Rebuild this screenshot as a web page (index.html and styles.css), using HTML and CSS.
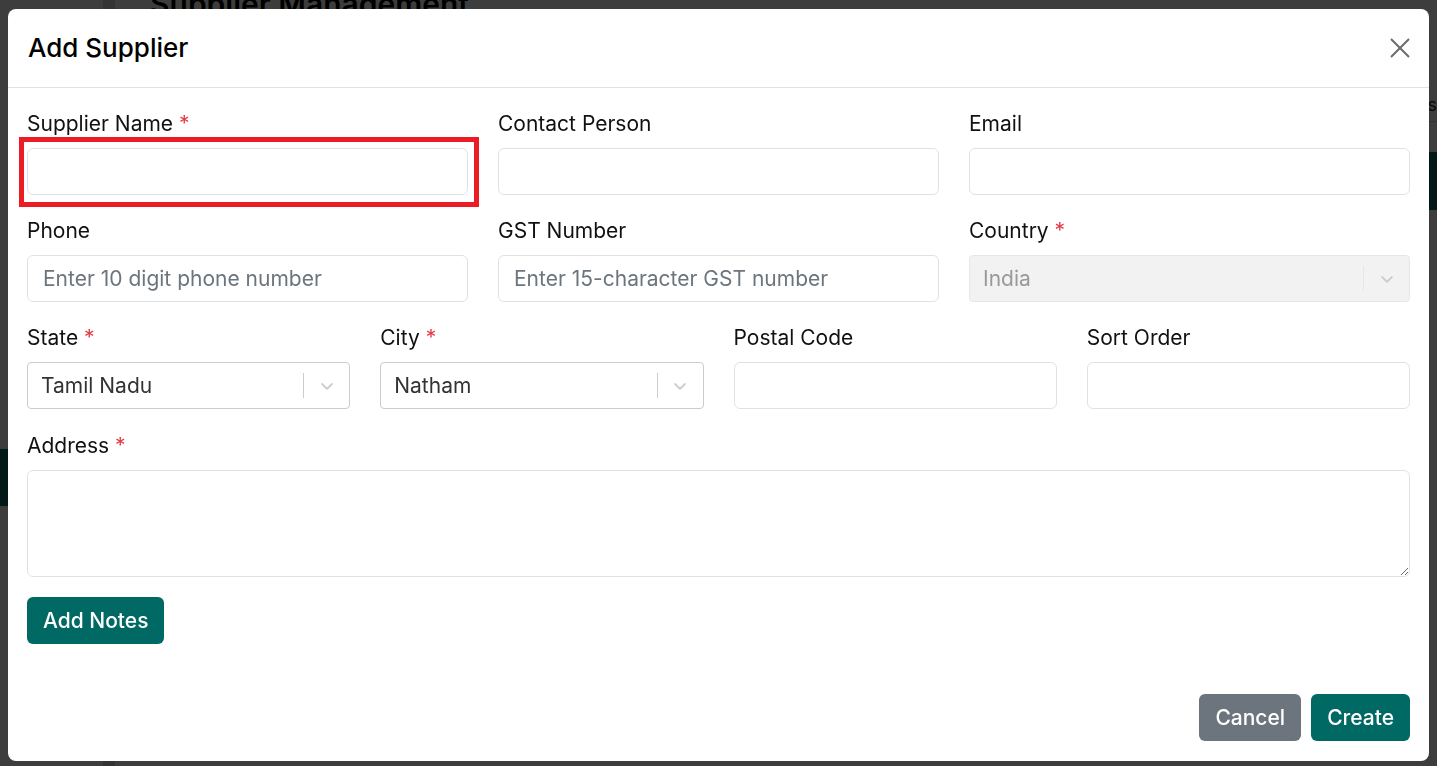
FILE: index.html
```html
<!DOCTYPE html>
<html lang="en">

<head>
    <meta charset="UTF-8">
    <title>Supplier Management</title>
    <meta name="viewport" content="width=device-width, initial-scale=1.0">
    <link rel="stylesheet" href="styles.css">
</head>

<body>
    <div class="page">
        <aside class="sidebar">
            <div class="sidebar-top"></div>
            <nav class="side-nav">
                <a class="side-link active">Suppliers</a>
                <a class="side-link">Purchaser</a>
                <a class="side-link">Reporter</a>
            </nav>
        </aside>
        <main class="main">
            <h1 class="page-title">Supplier Management</h1>
            <div class="toolbar"><span>Status</span></div>
            <div class="table-head"></div>
        </main>
    </div>

    <div class="backdrop">
        <div class="modal" role="dialog" aria-labelledby="modalTitle">
            <div class="modal-header">
                <h2 id="modalTitle">Add Supplier</h2>
                <button class="close-btn" type="button" aria-label="Close">
                    <svg width="20" height="20" viewBox="0 0 20 20" fill="none" stroke="currentColor" stroke-width="2">
                        <path d="M1 1L19 19M19 1L1 19" />
                    </svg>
                </button>
            </div>

            <form class="modal-body">
                <div class="row cols-3">
                    <div class="field">
                        <label>Supplier Name <span class="req">*</span></label>
                        <div class="flagged">
                            <input class="input" type="text">
                        </div>
                    </div>
                    <div class="field">
                        <label>Contact Person</label>
                        <input class="input" type="text">
                    </div>
                    <div class="field">
                        <label>Email</label>
                        <input class="input" type="email">
                    </div>
                </div>

                <div class="row cols-3">
                    <div class="field">
                        <label>Phone</label>
                        <input class="input" type="text" placeholder="Enter 10 digit phone number">
                    </div>
                    <div class="field">
                        <label>GST Number</label>
                        <input class="input" type="text" placeholder="Enter 15-character GST number">
                    </div>
                    <div class="field">
                        <label>Country <span class="req">*</span></label>
                        <div class="select disabled">
                            <span class="select-value">India</span>
                            <span class="select-sep"></span>
                            <span class="select-arrow">
                                <svg width="20" height="20" viewBox="0 0 20 20"><path fill="currentColor" d="M4.5 7.4c.4-.4 1-.4 1.4 0L10 11.4l4.1-4c.4-.4 1-.4 1.4 0 .4.4.4 1 0 1.4l-4.8 4.6c-.4.4-1 .4-1.4 0L4.5 8.8c-.4-.4-.4-1 0-1.4z"/></svg>
                            </span>
                        </div>
                    </div>
                </div>

                <div class="row cols-4">
                    <div class="field">
                        <label>State <span class="req">*</span></label>
                        <div class="select">
                            <span class="select-value">Tamil Nadu</span>
                            <span class="select-sep"></span>
                            <span class="select-arrow">
                                <svg width="20" height="20" viewBox="0 0 20 20"><path fill="currentColor" d="M4.5 7.4c.4-.4 1-.4 1.4 0L10 11.4l4.1-4c.4-.4 1-.4 1.4 0 .4.4.4 1 0 1.4l-4.8 4.6c-.4.4-1 .4-1.4 0L4.5 8.8c-.4-.4-.4-1 0-1.4z"/></svg>
                            </span>
                        </div>
                    </div>
                    <div class="field">
                        <label>City <span class="req">*</span></label>
                        <div class="select">
                            <span class="select-value">Natham</span>
                            <span class="select-sep"></span>
                            <span class="select-arrow">
                                <svg width="20" height="20" viewBox="0 0 20 20"><path fill="currentColor" d="M4.5 7.4c.4-.4 1-.4 1.4 0L10 11.4l4.1-4c.4-.4 1-.4 1.4 0 .4.4.4 1 0 1.4l-4.8 4.6c-.4.4-1 .4-1.4 0L4.5 8.8c-.4-.4-.4-1 0-1.4z"/></svg>
                            </span>
                        </div>
                    </div>
                    <div class="field">
                        <label>Postal Code</label>
                        <input class="input" type="text">
                    </div>
                    <div class="field">
                        <label>Sort Order</label>
                        <input class="input" type="text">
                    </div>
                </div>

                <div class="field address">
                    <label>Address <span class="req">*</span></label>
                    <textarea class="input textarea"></textarea>
                </div>

                <div class="notes-row">
                    <button class="btn btn-teal" type="button">Add Notes</button>
                </div>
            </form>

            <div class="modal-footer">
                <button class="btn btn-gray" type="button">Cancel</button>
                <button class="btn btn-teal" type="button">Create</button>
            </div>
        </div>
    </div>
</body>

</html>
```

FILE: styles.css
```css
* {
    margin: 0;
    padding: 0;
    box-sizing: border-box;
}

body {
    font-family: Inter, 'Noto Sans', sans-serif;
    color: #212529;
    background: white;
    height: 100vh;
    overflow: hidden;
}

/* page behind the dialog */
.page {
    display: flex;
    height: 100vh;
}

.sidebar {
    width: 115px;
    background: white;
    border-right: 12px solid #d9d9d9;
    display: flex;
    flex-direction: column;
}

.sidebar-top {
    height: 458px;
}

.side-nav {
    display: flex;
    flex-direction: column;
}

.side-link {
    height: 57px;
    padding: 0 12px;
    display: flex;
    align-items: center;
    font-size: 20px;
    color: #111;
}

.side-link.active {
    background: #0a6b66;
    color: white;
}

.side-link + .side-link {
    margin-top: 140px;
}

.side-link.active + .side-link {
    margin-top: 6px;
}

.main {
    flex: 1;
    padding: 0 0 0 35px;
}

.page-title {
    font-size: 30px;
    font-weight: 600;
    margin-top: -14px;
    color: #000;
}

.toolbar {
    height: 100px;
    border-bottom: 1px solid #ccc;
    display: flex;
    justify-content: flex-end;
    align-items: flex-end;
    padding-bottom: 6px;
    font-size: 18px;
}

.table-head {
    height: 58px;
    margin-top: 30px;
    background: #0a6b66;
}

/* dialog */
.backdrop {
    position: fixed;
    inset: 0;
    background: rgba(0, 0, 0, 0.76);
    padding: 9px 8px 5px;
    display: flex;
}

.modal {
    flex: 1;
    background: white;
    border-radius: 8px;
    display: flex;
    flex-direction: column;
}

.modal-header {
    height: 79px;
    border-bottom: 1px solid #dee2e6;
    display: flex;
    align-items: center;
    justify-content: space-between;
    padding: 0 19px 0 20px;
}

.modal-header h2 {
    font-size: 26px;
    font-weight: 500;
    color: #000;
    margin-top: -1px;
}

.close-btn {
    background: none;
    border: none;
    color: #6b6b6b;
    width: 20px;
    height: 20px;
    display: flex;
    cursor: pointer;
}

.modal-body {
    padding: 22px 19px 0;
    display: flex;
    flex-direction: column;
    gap: 22px;
}

.row {
    display: grid;
    column-gap: 30px;
}

.cols-3 {
    grid-template-columns: repeat(3, 1fr);
}

.cols-4 {
    grid-template-columns: repeat(4, 1fr);
}

.field label {
    display: block;
    font-size: 21px;
    line-height: 27px;
    margin-bottom: 11px;
    color: #111;
}

.field.address {
    margin-top: 1px;
}

.req {
    color: #e53946;
}

.input {
    display: block;
    width: 100%;
    height: 47px;
    border: 1px solid #dee2e6;
    border-radius: 6px;
    padding: 9px 15px;
    font-family: inherit;
    font-size: 21px;
    line-height: 27px;
    color: #212529;
    background: white;
}

.input::placeholder {
    color: #6c757d;
}

/* red marker frame around the required name box */
.flagged {
    position: relative;
}

.flagged::after {
    content: "";
    position: absolute;
    left: -8px;
    right: -11px;
    top: -11px;
    bottom: -12px;
    border: 5px solid #ec1c24;
    pointer-events: none;
}

.textarea {
    height: 107px;
    resize: vertical;
}

.select {
    height: 47px;
    border: 1px solid #ccc;
    border-radius: 4px;
    display: flex;
    align-items: center;
    background: white;
}

.select-value {
    flex: 1;
    padding-left: 13px;
    font-size: 21px;
    color: #333;
}

.select-sep {
    width: 1px;
    align-self: stretch;
    margin: 10px 0;
    background: #ccc;
}

.select-arrow {
    width: 45px;
    display: flex;
    justify-content: center;
    color: #ccc;
}

.select.disabled {
    background: #f2f2f2;
    border-color: #e6e6e6;
}

.select.disabled .select-value {
    color: #999;
}

.select.disabled .select-sep {
    background: #e6e6e6;
}

.notes-row {
    margin-top: -2px;
}

.btn {
    height: 47px;
    padding: 0 16px;
    border: none;
    border-radius: 6px;
    font-family: inherit;
    font-size: 21px;
    font-weight: 500;
    color: white;
    cursor: pointer;
}

.btn-teal {
    background: #006964;
}

.btn-gray {
    background: #6c757d;
}

.modal-footer {
    margin-top: auto;
    display: flex;
    justify-content: flex-end;
    gap: 10px;
    padding: 0 19px 20px;
}
```
